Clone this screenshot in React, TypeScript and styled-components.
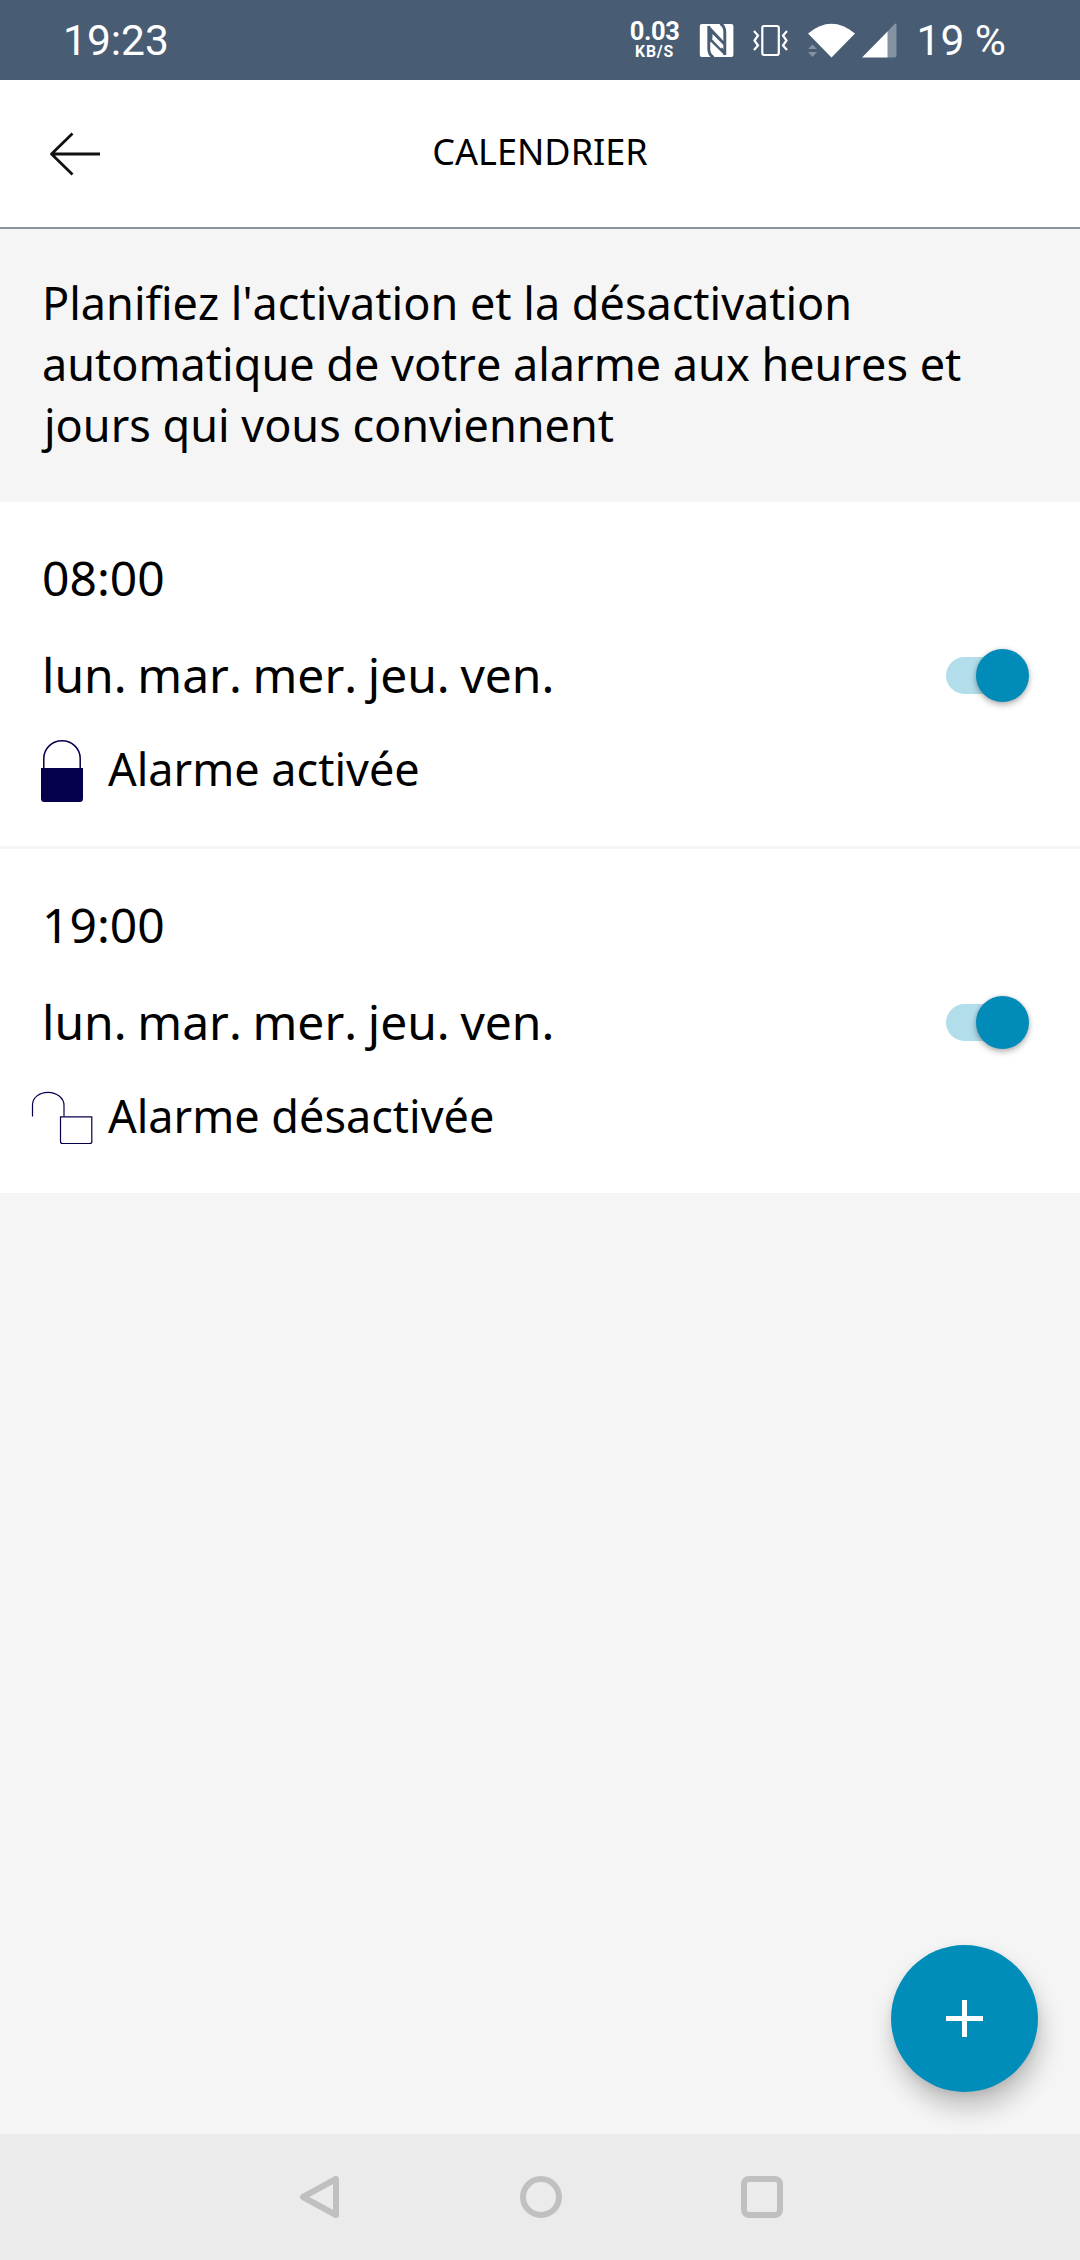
import React, { useState } from "react";
import styled, { createGlobalStyle } from "styled-components";

const GlobalStyle = createGlobalStyle`
  html, body { margin: 0; padding: 0; background: #f5f5f5; }
  *, *::before, *::after { box-sizing: border-box; }
`;

const Screen = styled.div`
  width: 1080px;
  height: 2260px;
  display: flex;
  flex-direction: column;
  overflow: hidden;
  background: #f5f5f5;
  color: #000;
  font-family: "Noto Sans", "Open Sans", sans-serif;
  font-kerning: none;
`;

const StatusBar = styled.header`
  flex: none;
  height: 80px;
  display: flex;
  align-items: center;
  padding: 0 74px 0 63px;
  background: #485c73;
  color: #fff;
  font-family: Roboto, sans-serif;

  svg { display: block; flex: none; }
`;

const StatusText = styled.span`
  font-size: 42.5px;
  line-height: 50px;
  padding-top: 2px;
  white-space: pre;
`;

const StatusIcons = styled.div`
  margin-left: auto;
  height: 80px;
  display: flex;
  align-items: center;
`;

const NetworkSpeed = styled.div`
  width: 50px;
  margin-right: 19px;
  padding-bottom: 2px;
  display: flex;
  flex-direction: column;
  align-items: center;
  font-weight: 700;
`;

const SpeedValue = styled.span`
  font-size: 25.5px;
  line-height: 25px;
  letter-spacing: -0.4px;
`;

const SpeedUnit = styled.span`
  font-size: 15.8px;
  line-height: 16px;
  letter-spacing: 0.8px;
`;

const StatusGlyphs = styled.svg`
  margin-right: 18px;
`;

const TitleBar = styled.div`
  flex: none;
  height: 149px;
  display: grid;
  grid-template-columns: 150px 1fr 150px;
  align-items: center;
  background: #fff;
  border-bottom: 2px solid #8a939d;
`;

const BackButton = styled.button`
  display: flex;
  padding: 0 0 0 48px;
  border: 0;
  background: none;

  svg { display: block; }
`;

const Title = styled.h1`
  margin: 0;
  padding-bottom: 5px;
  text-align: center;
  font-size: 36px;
  line-height: 49px;
  font-weight: 400;
`;

const Intro = styled.p`
  flex: none;
  height: 273px;
  margin: 0;
  padding: 43px 80px 0 42px;
  font-size: 45px;
  line-height: 61px;
`;

const IntroLine = styled.span<{ $inset?: number }>`
  display: block;
  padding-left: ${(p) => p.$inset ?? 0}px;
`;

const ScheduleList = styled.ul`
  flex: none;
  list-style: none;
  margin: 0;
  padding: 0;
  display: flex;
  flex-direction: column;
  gap: 3px;
`;

const ScheduleRow = styled.li`
  height: 344px;
  display: flex;
  align-items: center;
  justify-content: space-between;
  padding: 0 51px 0 0;
  background: #fff;
`;

const ScheduleInfo = styled.div`
  height: 344px;
  padding: 43px 0 0 42px;
`;

const Time = styled.div`
  font-size: 48px;
  line-height: 65px;
`;

const Days = styled.div`
  margin-top: 32px;
  font-size: 48px;
  line-height: 65px;
  word-spacing: -1.8px;
`;

const Action = styled.div`
  height: 61px;
  margin-top: 31px;
  margin-left: -12px;
  display: flex;
  align-items: center;
  font-size: 45px;
  line-height: 61px;

  svg { display: block; width: 66px; height: 66px; margin: 2px 12px 0 0; }
`;

const SwitchButton = styled.button<{ $on: boolean }>`
  width: 83px;
  height: 53px;
  margin-top: 3px;
  padding: 0;
  border: 0;
  display: flex;
  flex-direction: ${(p) => (p.$on ? "row" : "row-reverse")};
  align-items: center;
  background: none;
`;

const Track = styled.span<{ $on: boolean }>`
  flex: 1;
  height: 37px;
  margin: ${(p) => (p.$on ? "0 -27px 0 0" : "0 0 0 -27px")};
  border-radius: 19px;
  background: ${(p) => (p.$on ? "#b2ddea" : "#bbb")};
`;

const Thumb = styled.span<{ $on: boolean }>`
  position: relative;
  width: 53px;
  height: 53px;
  border-radius: 50%;
  background: ${(p) => (p.$on ? "#008bb8" : "#f1f1f1")};
  box-shadow: 0 3px 6px rgba(0, 0, 0, 0.28), 0 0 4px rgba(0, 0, 0, 0.1);
`;

const Content = styled.main`
  flex: 1;
  display: flex;
  flex-direction: column;
  align-items: flex-end;
  justify-content: flex-end;
  padding: 0 42px 42px 0;
`;

const AddButton = styled.button`
  width: 147px;
  height: 147px;
  display: flex;
  align-items: center;
  justify-content: center;
  padding: 0;
  border: 0;
  border-radius: 50%;
  background: #008dba;
  box-shadow: 3px 16px 24px rgba(0, 0, 0, 0.22), 0 3px 8px rgba(0, 0, 0, 0.08);
`;

const NavBar = styled.nav`
  flex: none;
  height: 126px;
  display: flex;
  align-items: center;
  justify-content: space-between;
  padding: 0 295px 0 296px;
  background: #ebebeb;

  svg { display: block; }
`;

const LockClosed = () => (
  <svg viewBox="0 0 66 66" fill="none">
    <path d="M13.8 31V21.5C13.8 11.5 22 3.7 32 3.7S50.2 11.5 50.2 21.5V31" stroke="#04004c" strokeWidth="1.5" />
    <path d="M11 31H53V61.5Q53 65 49.5 65H14.5Q11 65 11 61.5Z" fill="#04004c" />
  </svg>
);

const LockOpen = () => (
  <svg viewBox="0 0 66 66" fill="none" stroke="#04004c" strokeWidth="1.2">
    <path d="M2.5 32.5V21C2.5 13.5 9.5 8.4 18 8.4S34 13.8 34 21.5V32.5" />
    <path d="M30.5 32.8H61.8V57.5Q61.8 59.5 59.8 59.5H32.5Q30.5 59.5 30.5 57.5Z" />
  </svg>
);

interface Schedule {
  time: string;
  days: string;
  armed: boolean;
}

const schedules: Schedule[] = [
  { time: "08:00", days: "lun. mar. mer. jeu. ven.", armed: true },
  { time: "19:00", days: "lun. mar. mer. jeu. ven.", armed: false },
];

function ScheduleItem({ time, days, armed }: Schedule) {
  const [on, setOn] = useState(true);
  return (
    <ScheduleRow>
      <ScheduleInfo>
        <Time>{time}</Time>
        <Days>{days}</Days>
        <Action>
          {armed ? <LockClosed /> : <LockOpen />}
          {armed ? "Alarme activée" : "Alarme désactivée"}
        </Action>
      </ScheduleInfo>
      <SwitchButton $on={on} role="switch" aria-checked={on} onClick={() => setOn(!on)}>
        <Track $on={on} />
        <Thumb $on={on} />
      </SwitchButton>
    </ScheduleRow>
  );
}

export default function App() {
  return (
    <>
      <GlobalStyle />
      <Screen>
        <StatusBar>
          <StatusText>19:23</StatusText>
          <StatusIcons>
            <NetworkSpeed>
              <SpeedValue>0.03</SpeedValue>
              <SpeedUnit>KB/S</SpeedUnit>
            </NetworkSpeed>
            <StatusGlyphs width="200" height="80" viewBox="700 0 200 80" fill="none">
              <rect x="700.8" y="24" width="33.6" height="33" rx="2" fill="#fff" />
              <path
                d="M709.8 26V49Q709.800 54.500 714.500 57.500M725.800 55V32Q725.800 26.500 721.500 23.500"
                stroke="#485c73"
                strokeWidth="2.900"
              />
              <path d="M709.800 25.500L725 41.500V45.500L713.500 34V38L725.800 50.500V55.500L712 42H709.800Z" fill="#485c73" />
              <path d="M713.300 38.500L722.500 48" stroke="#fff" strokeWidth="1.600" />
              <rect x="763.300" y="26" width="16.500" height="29" rx="2" stroke="#fff" strokeWidth="2.200" />
              <path
                d="M755 31L759 35.500L755.500 40.500L759 45.500L755 50M788 31L784 35.500L787.500 40.500L784 45.500L788 50"
                stroke="#fff"
                strokeWidth="2.200"
              />
              <path d="M809 33.500Q832.500 14 856 33.500L832.500 57.500Z" fill="#fff" />
              <path d="M809 49L813.500 44.500L818 49ZM809 52L813.500 57L818 52Z" fill="#8592a2" />
              <path d="M888 32L895.500 24Q897.500 22.500 897.500 25V55.500Q897.500 57.500 895.500 57.500H888Z" fill="#8592a2" />
              <path d="M888.500 31.500V57.500H863Z" fill="#fff" />
            </StatusGlyphs>
            <StatusText>19 %</StatusText>
          </StatusIcons>
        </StatusBar>

        <TitleBar>
          <BackButton aria-label="Retour">
            <svg width="54" height="46" viewBox="0 0 54 46" fill="none" stroke="#111" strokeWidth="2.800" strokeLinejoin="round">
              <path d="M52 23H3M24.500 2.500L3.500 23L24.500 43.500" />
            </svg>
          </BackButton>
          <Title>CALENDRIER</Title>
        </TitleBar>

        <Intro>
          <IntroLine>Planifiez l'activation et la désactivation</IntroLine>
          <IntroLine>automatique de votre alarme aux heures et</IntroLine>
          <IntroLine $inset={2}>jours qui vous conviennent</IntroLine>
        </Intro>

        <ScheduleList>
          {schedules.map((s) => (
            <ScheduleItem key={s.time} {...s} />
          ))}
        </ScheduleList>

        <Content>
          <AddButton aria-label="Ajouter">
            <svg width="37" height="37" viewBox="0 0 37 37" fill="#fff">
              <path d="M16 0H21V16H37V21H21V37H16V21H0V16H16Z" />
            </svg>
          </AddButton>
        </Content>

        <NavBar>
          <svg width="46" height="46" viewBox="0 0 46 46" fill="none" stroke="#c0c0c0" strokeWidth="6" strokeLinejoin="round">
            <path d="M40 5V41L7 23Z" />
          </svg>
          <svg width="46" height="46" viewBox="0 0 46 46" fill="none" stroke="#c0c0c0" strokeWidth="6">
            <circle cx="23" cy="23" r="18" />
          </svg>
          <svg width="46" height="46" viewBox="0 0 46 46" fill="none" stroke="#c0c0c0" strokeWidth="6">
            <rect x="5" y="5" width="36" height="36" rx="5" />
          </svg>
        </NavBar>
      </Screen>
    </>
  );
}
